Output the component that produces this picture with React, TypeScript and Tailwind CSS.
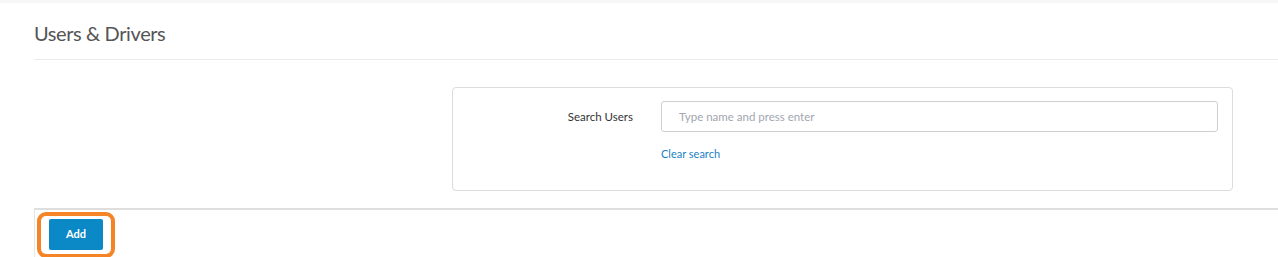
import React from "react";

export default function App() {
  return (
    <div className="relative h-[257px] w-[1278px] overflow-hidden bg-white font-['Lato',sans-serif] text-[#333]">
      {/* top strip */}
      <div className="h-[3px] bg-[#f7f7f7]" />

      {/* header */}
      <div className="ml-[34px] flex h-[57px] items-center border-b border-[#ebebeb]">
        <h1 className="pt-[3px] text-[20px] font-normal leading-none tracking-[-0.4px] text-[#555]">Users &amp; Drivers</h1>
      </div>

      {/* search card */}
      <div className="ml-[452px] mt-[27px] w-[781px] rounded-[4px] border border-[#dcdcdc] px-[14px] pt-[13px] pb-[31px]">
        <div className="flex items-center">
          <label className="w-[166px] text-right text-[11.5px] text-[#333]">Search Users</label>
          <div className="ml-[28px] flex-1">
            <input
              type="text"
              placeholder="Type name and press enter"
              className="h-[31px] w-full rounded-[3px] border border-[#cfcfcf] px-[17px] text-[11.5px] outline-none placeholder:text-[#a3a6b0]"
            />
          </div>
        </div>
        <div className="ml-[194px] mt-[16px] text-[11px] leading-none text-[#1b7fc4]">Clear search</div>
      </div>

      {/* footer bar */}
      <div className="ml-[34px] mt-[17px] h-[49px] border-l border-t-2 border-[#dedede] border-l-[#e6e6e6]" />

      {/* highlighted add button */}
      <div className="absolute left-[37px] top-[212px] h-[46px] w-[78px] rounded-[9px] border-[4px] border-[#f58426]" />
      <button className="absolute left-[49px] top-[219px] h-[31px] w-[54px] rounded-[2px] bg-[#0a89c6] text-[11px] font-bold text-white">
        Add
      </button>
    </div>
  );
}
